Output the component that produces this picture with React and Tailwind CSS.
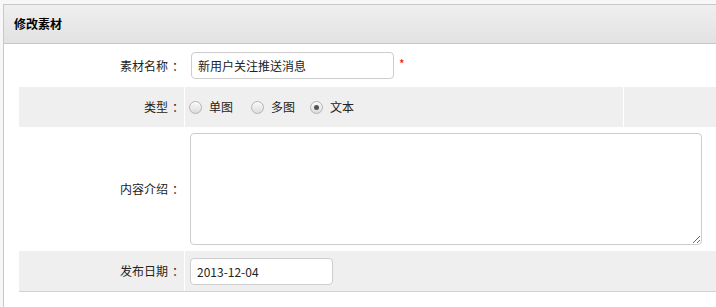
export default function App() {
    const font = { fontFamily: '"Microsoft YaHei", "Noto Sans CJK SC", "Noto Sans", sans-serif' };

    const Radio = ({ checked, label, className }) => (
        <label className={"flex items-center gap-[7px] " + (className || "")}>
            <span className="w-[13px] h-[13px] rounded-full border border-[#b4b4b4] bg-gradient-to-b from-[#fafafa] to-[#dcdcdc] flex items-center justify-center">
                {checked && <span className="w-[5px] h-[5px] rounded-full bg-[#555]" />}
            </span>
            <span>{label}</span>
        </label>
    );

    const Label = ({ children }) => (
        <div className="w-[165px] flex items-center justify-end">
            {children}
            <span className="ml-[4px] w-[12px]">：</span>
        </div>
    );

    return (
        <div className="w-[716px] h-[307px] overflow-hidden bg-[#f7f7f7] pt-[4px] pl-[3px] text-[12px] text-[#222]" style={font}>
            <div className="h-full bg-white border-t border-l border-[#c8c8c8]">
                {/* header */}
                <div className="h-[39px] flex items-center pl-[10px] bg-gradient-to-b from-[#efefef] to-[#e2e2e2] border-b border-[#c8c8c8] font-bold text-black">
                    修改素材
                </div>

                {/* form */}
                <div className="ml-[15px] border-b border-[#d2d2d2]">
                    <div className="flex h-[43px]">
                        <Label>素材名称</Label>
                        <div className="flex-1 flex items-center pl-[6px] ml-[1px]">
                            <input
                                type="text"
                                defaultValue="新用户关注推送消息"
                                className="w-[203px] h-[27px] border border-[#cdcdcd] rounded-[4px] px-[6px] text-[12px] outline-none"
                                style={font}
                            />
                            <span className="text-[#f00] ml-[5px] -mt-[4px]">*</span>
                        </div>
                    </div>

                    <div className="flex h-[40px] bg-[#efefef]">
                        <Label>类型</Label>
                        <div className="w-[439px] flex items-center pl-[4px] border-l border-white">
                            <Radio label="单图" className="mr-[18px]" />
                            <Radio label="多图" className="mr-[15px]" />
                            <Radio label="文本" checked />
                        </div>
                        <div className="flex-1 border-l border-white" />
                    </div>

                    <div className="flex h-[124px]">
                        <Label>内容介绍</Label>
                        <div className="flex-1 pt-[6px] pl-[5px] ml-[1px]">
                            <textarea
                                className="block w-[512px] h-[112px] border border-[#cdcdcd] rounded-[4px] outline-none"
                            />
                        </div>
                    </div>

                    <div className="flex h-[40px] bg-[#efefef]">
                        <Label>发布日期</Label>
                        <div className="flex-1 flex items-center pl-[5px] border-l border-white">
                            <input
                                type="text"
                                defaultValue="2013-12-04"
                                className="w-[143px] h-[27px] bg-white border border-[#cdcdcd] rounded-[4px] px-[6px] text-[12px] outline-none"
                                style={font}
                            />
                        </div>
                    </div>
                </div>
            </div>
        </div>
    );
}
